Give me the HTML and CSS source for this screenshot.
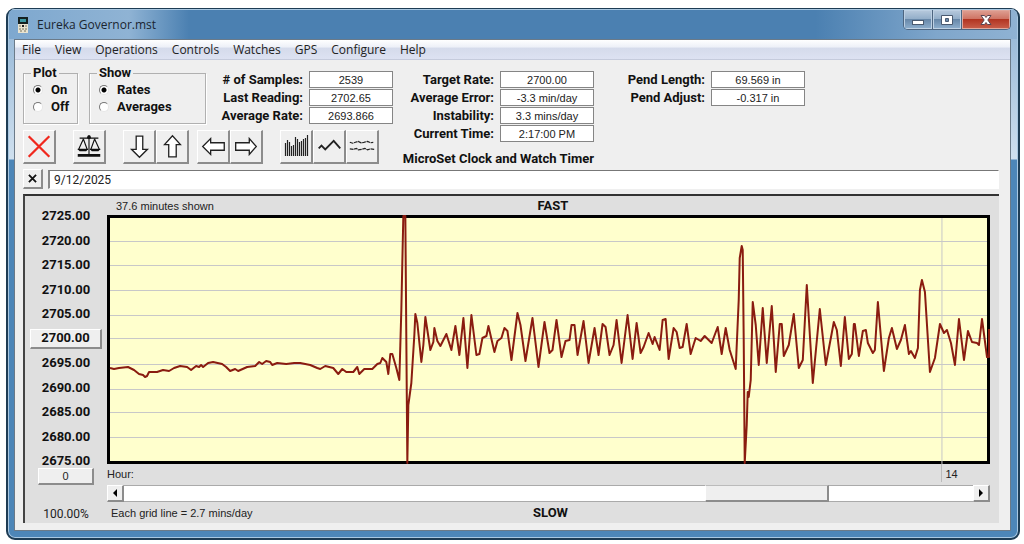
FILE: index.html
```html
<!DOCTYPE html>
<html lang="en">
<head>
<meta charset="utf-8">
<title>Eureka Governor.mst</title>
<link rel="stylesheet" href="styles.css">
</head>
<body>
<main class="window">
  <header class="titlebar">
    <svg class="app-icon" viewBox="0 0 12 16" aria-hidden="true">
      <rect x="1" y="0" width="10" height="16" fill="#e9e3cf"/>
      <rect x="1" y="0" width="10" height="7" fill="#15201f"/>
      <rect x="3" y="2" width="6" height="3" fill="#3c97a0"/>
      <path d="M2 9h2M8 9h2M2 12h2M5 12h2M8 12h2M3 14h2M7 14h2" stroke="#77735c" stroke-width="1"/>
      <path d="M5 8h2v2h-2z" fill="#222"/>
    </svg>
    <h1 class="title">Eureka Governor.mst</h1>
    <div class="caption-buttons">
      <button class="caption" aria-label="Minimize"><svg viewBox="0 0 14 12"><rect x="1.500" y="6.500" width="11" height="4" fill="#fff" stroke="#4a5a70"/></svg></button>
      <button class="caption" aria-label="Maximize"><svg viewBox="0 0 14 12"><path d="M1.500 1.500h11v9h-11zM5.500 4.500h3v3h-3z" fill="#fff" fill-rule="evenodd" stroke="#4a5a70"/></svg></button>
      <button class="caption close" aria-label="Close"><svg viewBox="0 0 14 12"><path d="M2 1.500h3.500l1.500 2 1.500-2h3.500l-3.200 4.500 3.200 4.500h-3.500l-1.500-2-1.500 2h-3.500l3.200-4.500z" fill="#fff" stroke="#5b4450"/></svg></button>
    </div>
  </header>

  <div class="client">
    <nav class="menubar">
      <button>File</button><button>View</button><button>Operations</button><button>Controls</button><button>Watches</button><button>GPS</button><button>Configure</button><button>Help</button>
    </nav>

    <section class="controls">
      <div class="left-block">
        <div class="settings">
          <fieldset class="group group-plot">
            <legend>Plot</legend>
            <label><input type="radio" name="plot" checked>On</label>
            <label><input type="radio" name="plot">Off</label>
          </fieldset>
          <fieldset class="group group-show">
            <legend>Show</legend>
            <label><input type="radio" name="show" checked>Rates</label>
            <label><input type="radio" name="show">Averages</label>
          </fieldset>
          <div class="readouts readouts-first">
            <label for="samples"># of Samples:</label><input id="samples" readonly value="2539">
            <label for="last">Last Reading:</label><input id="last" readonly value="2702.65">
            <label for="avg">Average Rate:</label><input id="avg" readonly value="2693.866">
          </div>
        </div>
        <div class="toolbar">
          <div class="tools">
            <button class="tool" aria-label="Stop"><svg viewBox="0 0 32 32"><path d="M5 5 27 27M27 5 5 27" stroke="#f0281e" stroke-width="2.400" fill="none"/></svg></button>
          </div>
          <div class="tools">
            <button class="tool" aria-label="Balance"><svg viewBox="0 0 32 32"><path d="M16 4v21M6 7h20M10 8l-5 11M10 8l4 11M22 8l-4 11M22 8l5 11M4 19h11M17 19h11" stroke="#111" stroke-width="1.200" fill="none"/><path d="M4 19h11l-2 2H6zM17 19h11l-2 2h-7zM4 24h24v3H4z" fill="#111"/><circle cx="16" cy="6" r="2" fill="#111"/></svg></button>
          </div>
          <div class="tools">
            <button class="tool" aria-label="Scroll down"><svg viewBox="0 0 32 32"><path d="M13 5h7v14h5l-8.500 8.500L8 19h5z" fill="#fff" stroke="#222" stroke-width="1.400"/></svg></button>
            <button class="tool" aria-label="Scroll up"><svg viewBox="0 0 32 32"><path d="M12.500 27v-13H8l8.500-9.500L25 14h-4.500v13z" fill="#fff" stroke="#222" stroke-width="1.400"/></svg></button>
          </div>
          <div class="tools">
            <button class="tool" aria-label="Scroll left"><svg viewBox="0 0 32 32"><path d="M28 12v8H13.500v4.500L5 16l8.500-8.500V12z" fill="#fff" stroke="#222" stroke-width="1.400"/></svg></button>
            <button class="tool" aria-label="Scroll right"><svg viewBox="0 0 32 32"><path d="M5 12v8h14.500v4.500L27 16l-7.500-8.500V12z" fill="#fff" stroke="#222" stroke-width="1.400"/></svg></button>
          </div>
          <div class="tools">
            <button class="tool" aria-label="Bars"><svg viewBox="0 0 30 31"><path d="M4.500 12v13M6.500 9v16M8.500 11v14M10.500 15v10M12.500 14v11M14.500 6v19M16.500 8v17M18.500 11v14M20.500 10v15M22.500 8v17M24.500 7v18M26.500 4v21" stroke="#222" stroke-width="1.200"/></svg></button>
            <button class="tool" aria-label="Line"><svg viewBox="0 0 32 32"><path d="M5 18l3-3 4 4 9-9 7 8" stroke="#222" stroke-width="2" fill="none"/></svg></button>
            <button class="tool" aria-label="Beats"><svg viewBox="0 0 32 32"><path d="M3 11.500l3 1 3-1 3-1 3 1.500 3-.5 4-1 3 1.500 3-.5M3 18.500l4 .5 3-1 2 1.500 4-.5 3-1 3 1.500 3-1 4 .5" stroke="#222" stroke-width="1.300" fill="none" stroke-dasharray="4 .7"/></svg></button>
          </div>
        </div>
      </div>

      <div class="middle-block">
        <div class="readouts">
          <label for="target">Target Rate:</label><input id="target" readonly value="2700.00">
          <label for="error">Average Error:</label><input id="error" readonly value="-3.3 min/day">
          <label for="instab">Instability:</label><input id="instab" readonly value="3.3 mins/day">
          <label for="time">Current Time:</label><input id="time" readonly value="2:17:00 PM">
        </div>
        <p class="product">MicroSet Clock and Watch Timer</p>
      </div>

      <div class="readouts">
        <label for="length">Pend Length:</label><input id="length" readonly value="69.569 in">
        <label for="adjust">Pend Adjust:</label><input id="adjust" readonly value="-0.317 in">
      </div>
    </section>

    <div class="notes">
      <button class="clear" aria-label="Clear note"><svg viewBox="0 0 10 10"><path d="M1 1l8 8M9 1 1 9" stroke="#111" stroke-width="2"/></svg></button>
      <input class="note" aria-label="Note" value="9/12/2025">
    </div>

    <section class="panel">
      <div class="scale">
        <div class="ticks">
          <span>2725.00</span><span>2720.00</span><span>2715.00</span><span>2710.00</span><span>2705.00</span>
          <button class="center-rate">2700.00</button>
          <span>2695.00</span><span>2690.00</span><span>2685.00</span><span>2680.00</span><span>2675.00</span>
        </div>
        <button class="zero">0</button>
        <span class="percent">100.00%</span>
      </div>
      <div class="chart">
        <div class="chart-head"><span>37.6 minutes shown</span><strong>FAST</strong></div>
        <div class="plot">
          <svg viewBox="110 218 876 243" preserveAspectRatio="none" role="img" aria-label="Rate over time">
            <path class="grid" d="M110 241.500H986M110 265.500H986M110 290.500H986M110 315.500H986M110 338.500H986M110 364.500H986M110 389.500H986M110 412.500H986M110 437.500H986M941 218V464"/>
            <polyline class="trace" points="110,368 114,369 119,368 128,367 134,370 139,374 143,375 145,377 147,376 149,372 157,372 163,370 169,371 174,368 180,366 187,367 191,370 196,366 199,367 201,365 203,367 208,363 213,362 222,364 226,367 230,371 235,369 238,371 247,367 255,366 259,362 262,364 266,361 270,362 272,365 277,363 286,364 294,363 300,363 310,365 317,368 320,369 325,366 333,368 338,374 342,369 346,372 353,372 357,367 359,374 364,369 372,369 377,364 380,363 382,358 386,362 388,374 390,354 392,354 396,368 399,380 400,345 401,310 402,262 403,216 405,216 406,340 407,463 408,405 411,383 414,335 415,314 417,323 421,362 423,345 425,317 430,350 433,342 434,328 437,341 440,346 446,334 451,350 455,326 459,355 463,318 467,368 471,315 476,355 479,354 482,338 486,336 488,326 494,352 497,341 501,338 504,328 507,331 511,360 517,313 520,325 525,361 532,318 538,367 544,322 549,353 552,350 556,320 561,357 565,341 569,340 571,325 574,325 577,355 583,321 588,363 594,328 598,355 602,324 605,327 609,355 613,345 616,320 621,363 627,315 632,359 636,323 640,353 643,347 648,333 652,344 654,337 659,350 662,320 665,319 668,359 673,328 676,332 679,348 682,347 686,324 690,354 695,338 700,341 704,336 711,343 717,327 721,354 725,328 729,350 735,369 738,300 739,258 741,246 742,250 743,340 744,463 746,425 747,392 748,397 750,380 752,302 755,325 758,365 762,308 766,363 771,306 775,372 779,324 781,324 783,356 788,345 793,314 798,368 802,360 806,285 812,383 819,309 825,365 833,322 836,330 840,366 844,317 848,359 851,354 853,324 854,324 858,356 862,331 865,330 867,343 872,353 874,350 877,302 883,371 888,338 891,328 896,349 900,340 904,325 908,354 910,351 914,358 917,348 919,290 921,280 924,292 929,372 934,358 939,324 943,333 946,330 950,343 954,365 958,319 963,360 967,331 971,342 976,343 978,345 981,319 986,357 988,357 988,329"/>
          </svg>
        </div>
        <div class="hours"><span>Hour:</span><span class="hour-mark" style="left:94.500%">14</span></div>
        <div class="scroller">
          <button class="arrow" aria-label="Earlier"><svg viewBox="0 0 8 8"><path d="M6 0v8L2 4z"/></svg></button>
          <input class="scroll" type="range" min="0" max="1000" value="801" aria-label="Time position">
          <button class="arrow" aria-label="Later"><svg viewBox="0 0 8 8"><path d="M2 0v8l4-4z"/></svg></button>
        </div>
        <div class="chart-foot"><span>Each grid line = 2.7 mins/day</span><strong>SLOW</strong></div>
      </div>
    </section>
  </div>
</main>
</body>
</html>
```
FILE: styles.css
```css
* { box-sizing: border-box; }
body {
  margin: 0;
  min-height: 100vh;
  display: flex;
  padding: 8px 4px 4px 6px;
  background: #fff;
  font: 12px/14px Roboto, "Liberation Sans", sans-serif;
  color: #222;
}
button, input { font: inherit; color: inherit; margin: 0; padding: 0; border: 0; border-radius: 0; }
svg { display: block; }

.window {
  flex: 1;
  display: flex;
  flex-direction: column;
  padding: 0 7px 7px 6px;
  border: 2px solid #1e3c54;
  border-top-width: 1px;
  border-radius: 9px;
  background: linear-gradient(#8fb2d3, #cfe0ef 150px, #4d86b8 151px);
  box-shadow: inset 0 0 0 1px #a9c8e2;
  overflow: hidden;
}
.titlebar {
  display: flex;
  align-items: center;
  height: 30px;
  margin: 0 -6px 0 -5px;
  padding: 0 6px 0 8px;
  background: linear-gradient(90deg, #7ea8cf, #8fb3d4 120px, #4b80b1 180px, #4b80b1 80%, #7fa6cb 92%, #8fb2d3);
  border-top: 1px solid #a9c8e2;
}
.app-icon { width: 12px; height: 16px; }
.title { flex: 1; margin: 0 0 0 8px; font: 12px/16px "Open Sans", sans-serif; color: #1a2530; }
.caption-buttons {
  align-self: flex-start;
  display: flex;
  height: 20px;
  border: 1px solid #4d6580;
  border-top: 0;
  border-radius: 0 0 5px 5px;
  overflow: hidden;
}
.caption {
  width: 29px;
  display: flex;
  align-items: center;
  justify-content: center;
  background: linear-gradient(#b8cadd, #94afca 45%, #6888a9 50%, #8fb0cf);
  border-right: 1px solid #4d6580;
  box-shadow: inset 0 0 0 1px #bdd0e3;
}
.caption svg { width: 14px; height: 12px; }
.caption.close {
  width: 48px;
  border-right: 0;
  background: linear-gradient(#dfa194, #cf7565 45%, #b23522 50%, #c9604c);
  box-shadow: inset 0 0 0 1px #e0a79c;
}

.client {
  flex: 1;
  display: flex;
  flex-direction: column;
  border: 1px solid #6b7a88;
  background: #efefef;
  padding-bottom: 7px;
}
.menubar {
  display: flex;
  gap: 14px;
  height: 20px;
  padding: 0 7px;
  background: linear-gradient(#fff, #eef1f8 35%, #d5dbeb 45%, #dde2f2);
  border-bottom: 1px solid #c5cbdc;
}
.menubar button { background: none; font: 12px/20px "Open Sans", sans-serif; color: #222; }

.controls { display: flex; padding: 6px 12px 0 8px; height: 109px; }
.left-block { width: 370px; }
.settings { display: flex; height: 59px; }
.group {
  margin: 0;
  min-width: 0;
  height: 58px;
  padding: 1px 0 0 9px;
  border: 1px solid #b0b0b0;
  box-shadow: inset 1px 0 #fff, 1px 1px #fff;
}
.group-plot { width: 55px; }
.group-show { width: 117px; margin-left: 11px; }
.group legend { margin-left: -2px; padding: 0 2px; font-weight: bold; font-size: 13px; color: #111; }
.group label { display: flex; align-items: center; gap: 8px; height: 17px; font-weight: bold; font-size: 13px; color: #111; }
.group input {
  appearance: none;
  width: 10px;
  height: 10px;
  border: 1px solid;
  border-color: #777 #e6e6e6 #e6e6e6 #777;
  border-radius: 50%;
  background: #fff;
}
.group input:checked { background: radial-gradient(circle, #000 2px, #fff 3px); }

.readouts {
  display: grid;
  grid-template-columns: 101px 94px;
  grid-auto-rows: 17px;
  gap: 1px 6px;
  align-content: start;
  padding-top: 5px;
}
.readouts-first { grid-template-columns: 97px 84px; }
.readouts label { text-align: right; font-weight: bold; font-size: 13px; line-height: 17px; color: #111; white-space: nowrap; }
.readouts input { width: 100%; height: 17px; border: 1px solid #858585; background: #fff; text-align: center; }
.readouts input, .zero, .chart { font-family: "Liberation Sans", Arial, sans-serif; font-size: 11px; }
.middle-block { width: 201px; margin-right: 10px; }
.product { margin: 10px 0 0; text-align: right; font-weight: bold; font-size: 13px; color: #111; white-space: nowrap; }

.toolbar { display: flex; padding-top: 5px; }
.tools { display: flex; }
.tools + .tools { margin-left: 17px; }
.tools:nth-child(4) { margin-left: 8px; }
.tool, .clear, .center-rate, .zero, .arrow {
  background: #efefef;
  border: solid;
  border-width: 1px 2px 2px 1px;
  border-color: #fff #8c8c8c #8c8c8c #fff;
}
.tool { width: 33px; height: 34px; }
.tool svg { width: 30px; height: 31px; }

.notes { display: flex; gap: 5px; padding: 0 11px 0 8px; }
.clear { width: 20px; height: 20px; display: flex; align-items: center; justify-content: center; }
.clear svg { width: 9px; height: 9px; }
.note { flex: 1; height: 19px; margin-top: 1px; padding-left: 4px; background: #fff; border: 1px solid #fff; border-top-color: #777; border-left: 2px solid #888; }

.panel {
  flex: 1;
  display: flex;
  margin: 5px 11px 0 8px;
  padding: 1px 9px 0 1px;
  background: #dfdfdf;
  border-top: 2px solid #333;
  border-left: 2px solid #444;
}
.scale { width: 81px; padding: 12px 5px 0 4px; display: flex; flex-direction: column; align-items: center; }
.ticks { flex: 1; width: 100%; display: flex; flex-direction: column; justify-content: space-between; align-items: center; font-weight: bold; font-size: 13px; color: #111; }
.ticks span { height: 14px; }
.center-rate { width: 100%; height: 20px; margin: -3px 0; }
.zero { width: 56px; height: 17px; line-height: 14px; }
.percent { height: 38px; padding-top: 22px; }
.chart { flex: 1; display: flex; flex-direction: column; }
.chart-head, .chart-foot { display: grid; grid-template-columns: 1fr auto 1fr; align-items: center; }
.chart-head { height: 18px; padding-left: 9px; }
.chart-foot { height: 21px; padding-left: 4px; }
.chart strong { font-family: Roboto, sans-serif; font-size: 13px; color: #111; }
.plot { flex: 1; min-height: 120px; position: relative; background: #ffffcd; border: 3px solid #000; }
.plot svg { position: absolute; inset: 0; width: 100%; height: 100%; overflow: visible; }
.grid { fill: none; stroke: #c8c8c8; stroke-width: 1; }
.trace { fill: none; stroke: #8a1c10; stroke-width: 2; stroke-linejoin: round; vector-effect: non-scaling-stroke; }
.hours { position: relative; height: 21px; line-height: 20px; }
.hour-mark { position: absolute; top: 0; height: 18px; padding-left: 3px; border-left: 1px solid #bbb; }
.scroller { display: flex; height: 17px; }
.arrow { width: 17px; display: flex; align-items: center; justify-content: center; }
.arrow svg { width: 8px; height: 8px; }
.scroll { appearance: none; flex: 1; min-width: 0; height: 17px; background: #fff; border-top: 1px solid #aaa; border-bottom: 1px solid #aaa; }
.scroll::-webkit-slider-thumb { appearance: none; width: 124px; height: 17px; background: #efefef; border: solid; border-width: 1px 2px 2px 1px; border-color: #bbb #8c8c8c #8c8c8c #fff; }
```
